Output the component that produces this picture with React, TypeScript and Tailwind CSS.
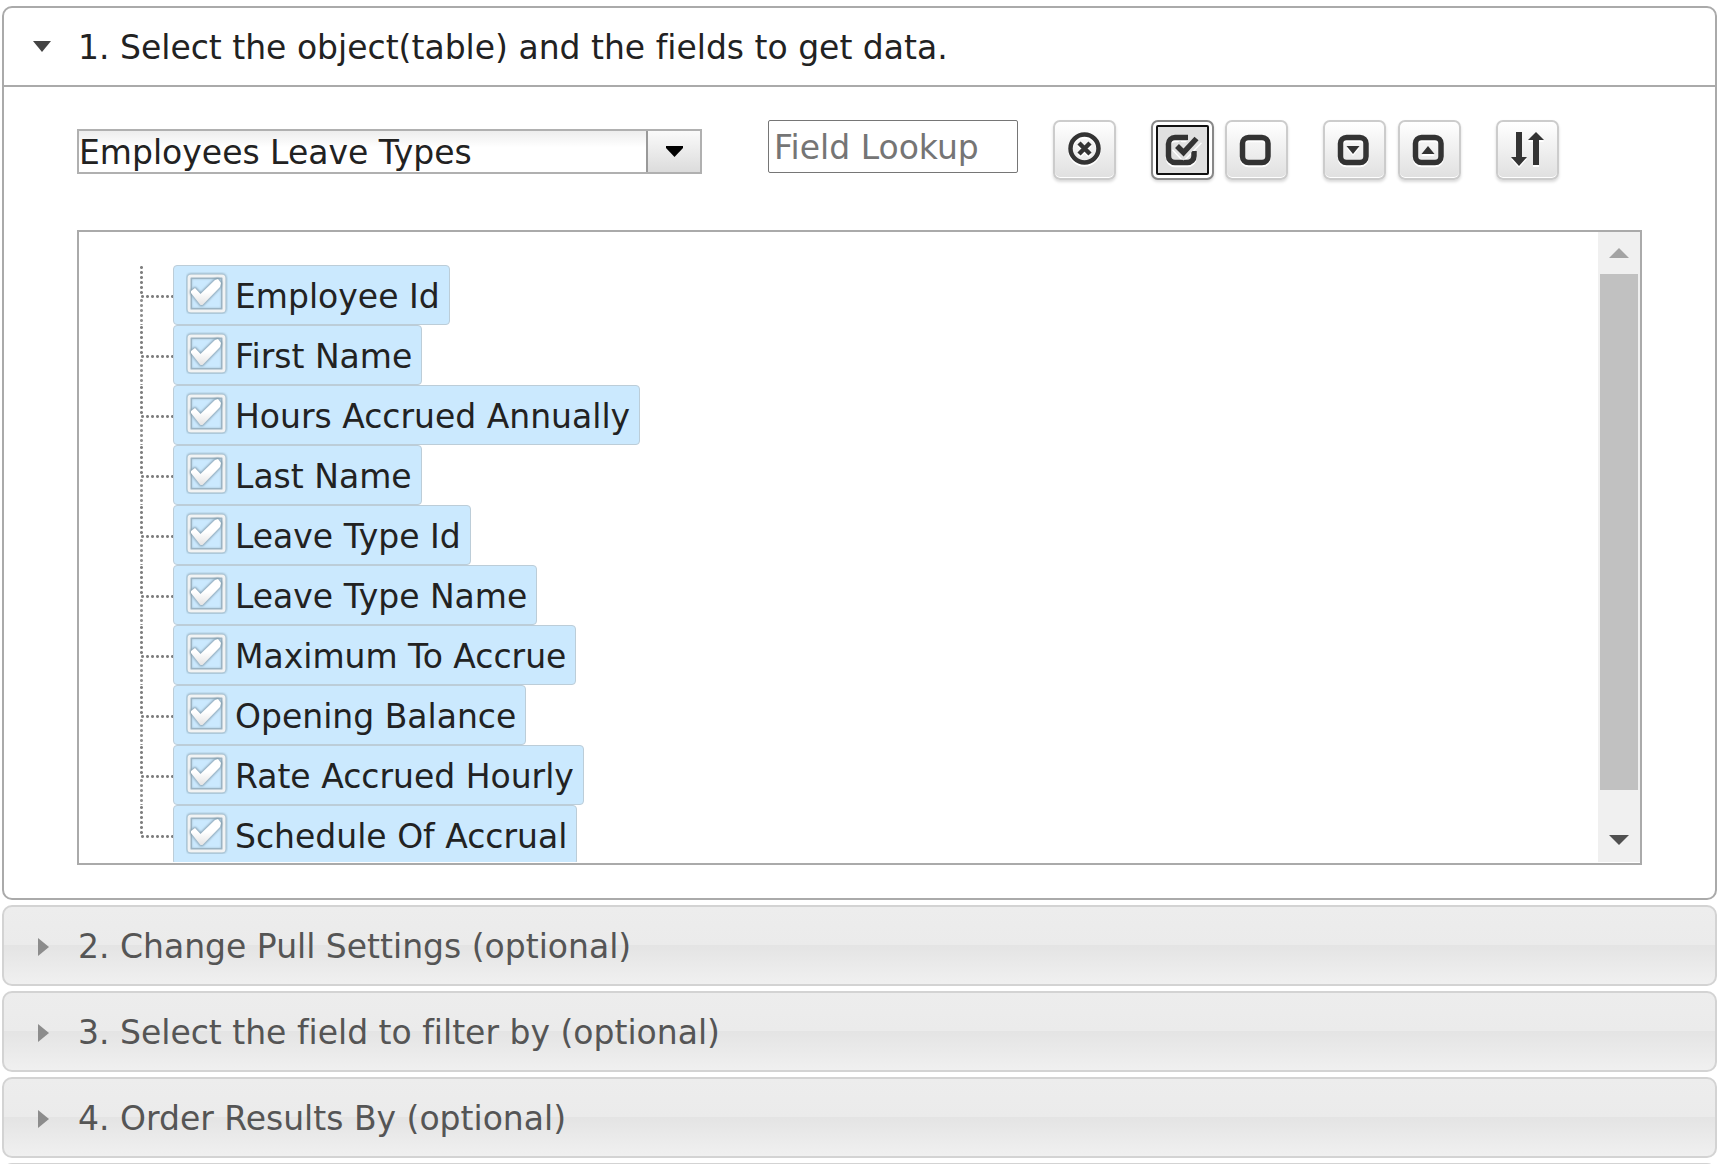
import { useState, type ReactNode } from "react";

const FIELDS = [
  "Employee Id",
  "First Name",
  "Hours Accrued Annually",
  "Last Name",
  "Leave Type Id",
  "Leave Type Name",
  "Maximum To Accrue",
  "Opening Balance",
  "Rate Accrued Hourly",
  "Schedule Of Accrual",
];

const SECTIONS = [
  "2. Change Pull Settings (optional)",
  "3. Select the field to filter by (optional)",
  "4. Order Results By (optional)",
];

function ToolButton({ label, active = false, onClick, children }: { label: string; active?: boolean; onClick?: () => void; children: ReactNode }) {
  return (
    <button
      type="button"
      aria-label={label}
      title={label}
      onClick={onClick}
      className={
        active
          ? "flex h-[60px] w-[63px] shrink-0 items-center justify-center rounded-[7px] border-2 border-[#888] bg-[#e0e0e0] shadow-[0_2px_3px_rgba(0,0,0,0.15),inset_0_0_0_3px_#fff] outline-2 -outline-offset-7 outline-[#101010]"
          : "flex h-[60px] w-[63px] shrink-0 items-center justify-center rounded-[7px] border-2 border-[#ccc] bg-linear-to-b from-white to-[#e0e0e0] shadow-[0_2px_3px_rgba(0,0,0,0.15),inset_0_-1px_0_#fff]"
      }
    >
      <svg width="35" height="36" viewBox="0 0 35 36" fill="none" stroke="#333" className="overflow-visible drop-shadow-[0_2px_0_#fff]">
        {children}
      </svg>
    </button>
  );
}

function CheckMark({ checked }: { checked: boolean }) {
  return (
    <svg width="42" height="42" viewBox="0 0 42 42" fill="none" className="shrink-0" aria-hidden="true">
      <defs>
        <linearGradient id="tick" x1="0" y1="0" x2="0" y2="1">
          <stop offset="0.5" stopColor="#fff" />
          <stop offset="1" stopColor="#e4e4e4" />
        </linearGradient>
        <filter id="soft" x="-20%" y="-20%" width="140%" height="140%">
          <feGaussianBlur stdDeviation="1" />
        </filter>
      </defs>
      <rect x="3" y="4" width="35" height="35" rx="2" stroke="#8fa9b8" strokeWidth="5" filter="url(#soft)" />
      <rect x="5" y="6" width="31" height="31" stroke="#9bb3c3" strokeWidth="2" />
      <rect x="3" y="4" width="35" height="35" rx="2" stroke="#f1f3f4" strokeWidth="3" />
      {checked && (
        <>
          <path d="M9 16l5.500 6L29 8l3-1 3 4-1 4-17.500 18h-2L5 21v-2z" stroke="#7f98a8" strokeWidth="2" filter="url(#soft)" />
          <path d="M9 16l5.500 6L29 8l3-1 3 4-1 4-17.500 18h-2L5 21v-2z" fill="url(#tick)" />
        </>
      )}
    </svg>
  );
}

function FieldRow({ name, last, checked, onToggle }: { name: string; last: boolean; checked: boolean; onToggle: () => void }) {
  return (
    <li className="flex h-[60px]">
      <div className="flex w-[33px] shrink-0 flex-col" aria-hidden="true">
        <span className="h-[30px] w-[3px] bg-[radial-gradient(circle,#808080_1px,transparent_2px)] bg-size-[3px_5px]" />
        <span className="h-[3px] bg-[radial-gradient(circle,#808080_1px,transparent_2px)] bg-size-[5px_3px]" />
        {!last && <span className="w-[3px] flex-1 bg-[radial-gradient(circle,#909090_1px,transparent_2px)] bg-size-[3px_5px]" />}
      </div>
      <label
        className={
          checked
            ? "flex items-center gap-[7px] rounded-[4px] border border-[#bccdd8] bg-[#cbe9fe] pr-[9px] pl-3"
            : "flex items-center gap-[7px] rounded-[4px] border border-transparent pr-[9px] pl-3"
        }
      >
        <input type="checkbox" checked={checked} onChange={onToggle} className="sr-only" />
        <span className="pb-1">
          <CheckMark checked={checked} />
        </span>
        <span className="pt-[3px] whitespace-nowrap">{name}</span>
      </label>
    </li>
  );
}

export default function App() {
  const [open, setOpen] = useState(true);
  const [query, setQuery] = useState("");
  const [off, setOff] = useState<string[]>([]);
  const shown = FIELDS.filter((f) => f.toLowerCase().includes(query.toLowerCase()));

  return (
    <main className="flex flex-col gap-[5px] bg-white pt-[6px] pr-[5px] pl-[2px] font-['DejaVu_Sans',sans-serif] text-[33px] leading-[40px] text-[#222] [font-variant-ligatures:none]">
      <section className="rounded-[10px] border-2 border-[#aaa]">
        <h3 className="border-b-2 border-[#aaa]">
          <button type="button" aria-expanded={open} onClick={() => setOpen(!open)} className="flex h-[77px] w-full items-center pt-[2px] pl-[28px] text-left">
            <svg width="20" height="12" viewBox="0 0 20 12" className="mr-[26px] mb-[2px]" aria-hidden="true">
              <path d="M1 0h18l-9 11z" fill="#444" />
            </svg>
            1. Select the object(table) and the fields to get data.
          </button>
        </h3>
        {open && (
          <div className="px-[73px] py-[33px]">
            <div className="flex items-start">
              <div className="relative mt-[9px] w-[625px]">
                <select
                  aria-label="Object"
                  defaultValue="Employees Leave Types"
                  className="block h-[45px] w-full appearance-none border-2 border-[#b0b0b0] bg-linear-to-b from-[#ededed] to-white to-40% pt-[2px] leading-[40px]"
                >
                  <option>Employees Leave Types</option>
                </select>
                <span className="pointer-events-none absolute inset-y-[2px] right-[2px] flex w-[54px] items-center justify-center border-l-2 border-[#999] bg-linear-to-b from-[#fafafa] to-[#dcdcdc]">
                  <svg width="17" height="11" viewBox="0 0 17 11" aria-hidden="true">
                    <path d="M0 0h17v2l-8.500 9L0 2z" fill="#000" />
                  </svg>
                </span>
              </div>
              <input
                type="text"
                aria-label="Field Lookup"
                placeholder="Field Lookup"
                value={query}
                onChange={(e) => setQuery(e.target.value)}
                className="ml-[66px] h-[53px] w-[250px] rounded-[2px] border border-[#767676] pt-[2px] pl-[5px] placeholder:text-[#757575]"
              />
              <div className="ml-[35px] flex gap-[35px]">
                <ToolButton label="Clear lookup" onClick={() => setQuery("")}>
                  <circle cx="17.500" cy="16.500" r="14" strokeWidth="4.500" />
                  <path d="M12 11l11 11M23 11l-11 11" strokeWidth="4.500" />
                </ToolButton>
                <div className="flex gap-[11px]">
                  <ToolButton label="Select all" active onClick={() => setOff([])}>
                    <path d="M23 5.500H10a6.500 6.500 0 0 0-6.500 6.500v12a6.500 6.500 0 0 0 6.500 6.500h12.500a6.500 6.500 0 0 0 6.500-6.500v-5" strokeWidth="5.500" />
                    <path d="M11 12.500l7.500 8L33 5.500" stroke="#e0e0e0" strokeWidth="11" />
                    <path d="M12 14l6.500 6.500L31.500 6.500" strokeWidth="5.500" />
                  </ToolButton>
                  <ToolButton label="Select none" onClick={() => setOff(FIELDS)}>
                    <rect x="3.500" y="5.500" width="25.500" height="25" rx="6" strokeWidth="5.500" />
                  </ToolButton>
                </div>
                <div className="flex gap-3">
                  <ToolButton label="Expand all">
                    <rect x="3.500" y="5.500" width="25.500" height="25" rx="6" strokeWidth="5.500" />
                    <path d="M9.500 14h13L16 22z" fill="#333" stroke="none" />
                  </ToolButton>
                  <ToolButton label="Collapse all">
                    <rect x="3.500" y="5.500" width="25.500" height="25" rx="6" strokeWidth="5.500" />
                    <path d="M9.500 22h13L16 14z" fill="#333" stroke="none" />
                  </ToolButton>
                </div>
                <ToolButton label="Sort">
                  <path d="M6 0h6v25h5l-8 9-8-9h5zM23 33h6V8h5l-8-8-8 8h5z" fill="#333" stroke="none" />
                </ToolButton>
              </div>
            </div>

            <div className="mt-[50px] flex h-[635px] border-2 border-[#aaa] pb-px">
              <ul className="flex-1 overflow-hidden pt-[33px] pl-[61px]">
                {shown.map((name, i) => (
                  <FieldRow
                    key={name}
                    name={name}
                    last={i === shown.length - 1}
                    checked={!off.includes(name)}
                    onToggle={() => setOff(off.includes(name) ? off.filter((n) => n !== name) : [...off, name])}
                  />
                ))}
              </ul>
              <div className="flex w-[42px] flex-col items-center bg-[#f0f0f0]" aria-hidden="true">
                <div className="flex h-[42px] items-center">
                  <svg width="20" height="10" viewBox="0 0 20 10">
                    <path d="M0 10h20L10 0z" fill="#a3a3a3" />
                  </svg>
                </div>
                <div className="h-[516px] w-[38px] bg-[#c1c1c1]" />
                <div className="mt-auto flex h-[44px] items-center">
                  <svg width="20" height="10" viewBox="0 0 20 10">
                    <path d="M0 0h20L10 10z" fill="#505050" />
                  </svg>
                </div>
              </div>
            </div>
          </div>
        )}
      </section>

      {SECTIONS.map((title) => (
        <h3 key={title}>
          <button
            type="button"
            aria-expanded="false"
            className="flex h-[81px] w-full items-center rounded-[10px] border-2 border-[#d3d3d3] bg-[linear-gradient(to_bottom,#ededed_0%,#ebebeb_49%,#e4e4e4_50%,#f0f0f0_100%)] pt-[2px] pl-[34px] text-left text-[#555]"
          >
            <svg width="11" height="18" viewBox="0 0 11 18" className="mr-[29px]" aria-hidden="true">
              <path d="M0 0l11 9L0 18z" fill="#8c8c8c" />
            </svg>
            {title}
          </button>
        </h3>
      ))}
      <div className="h-px overflow-hidden" aria-hidden="true">
        <div className="h-[81px] rounded-[10px] border-2 border-[#d3d3d3] bg-[#ededed]" />
      </div>
    </main>
  );
}
